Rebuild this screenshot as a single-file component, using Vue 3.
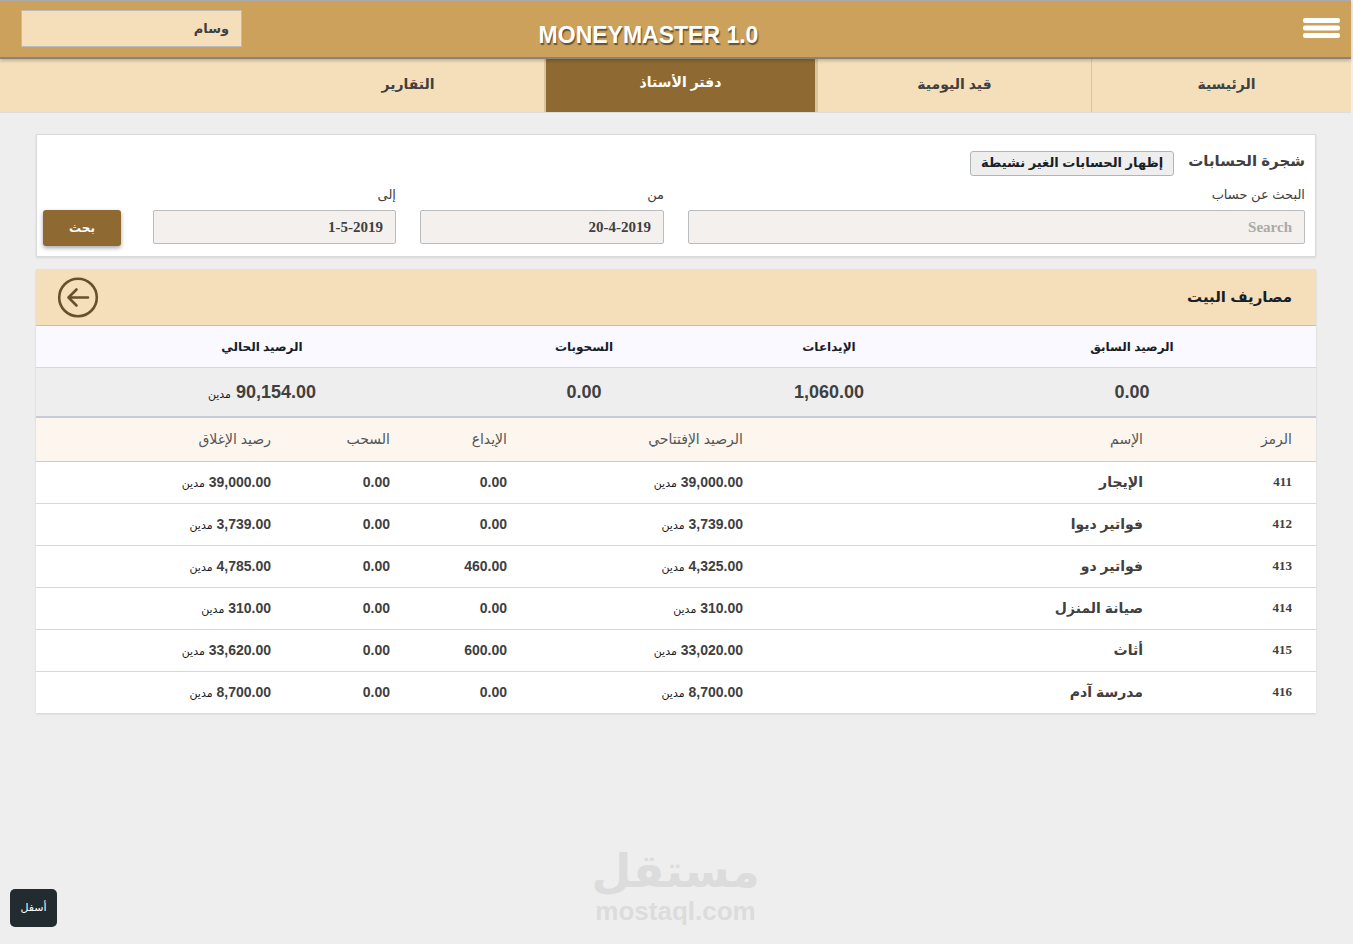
<template>
  <div class="page" dir="rtl">
    <header class="topbar">
      <button class="menu-button" type="button" aria-label="القائمة">
        <svg width="38" height="22" viewBox="0 0 38 22" aria-hidden="true">
          <rect x="1" y="1" width="37" height="5" rx="2" />
          <rect x="1" y="8.500" width="37" height="5" rx="2" />
          <rect x="1" y="16" width="37" height="5" rx="2" />
        </svg>
      </button>
      <h1 class="brand">MONEYMASTER 1.0</h1>
      <input v-model="userName" class="user-name" type="text" aria-label="المستخدم">
    </header>

    <nav class="tabs">
      <a
        v-for="tab in tabs"
        :key="tab"
        href="#"
        class="tab"
        :class="{ active: tab === activeTab }"
        @click.prevent="activeTab = tab"
      >{{ tab }}</a>
    </nav>

    <main class="content">
      <section class="search-card">
        <div class="search-head">
          <h2 class="search-title">شجرة الحسابات</h2>
          <button class="toggle-inactive" type="button">إظهار الحسابات الغير نشيطة</button>
        </div>
        <form class="search-form" @submit.prevent>
          <div class="field">
            <label for="account">البحث عن حساب</label>
            <input id="account" v-model="query" type="text" placeholder="Search">
          </div>
          <div class="field">
            <label for="from">من</label>
            <input id="from" v-model="from" type="text">
          </div>
          <div class="field">
            <label for="to">إلى</label>
            <input id="to" v-model="to" type="text">
          </div>
          <button class="search-button" type="submit">بحث</button>
        </form>
      </section>

      <section class="ledger">
        <div class="ledger-head">
          <h2 class="ledger-title">مصاريف البيت</h2>
          <button class="back-button" type="button" aria-label="رجوع">
            <svg width="42" height="42" viewBox="0 0 42 42" aria-hidden="true">
              <circle cx="21" cy="21.500" r="18.800" />
              <path d="M31 21.500H11.500M19.500 13.500l-8 8 8 8" />
            </svg>
          </button>
        </div>

        <table class="summary">
          <colgroup>
            <col class="col-previous">
            <col class="col-deposits">
            <col class="col-withdrawals">
            <col class="col-current">
          </colgroup>
          <thead>
            <tr>
              <th>الرصيد السابق</th>
              <th>الإيداعات</th>
              <th>السحوبات</th>
              <th>الرصيد الحالي</th>
            </tr>
          </thead>
          <tbody>
            <tr>
              <td>0.00</td>
              <td>1,060.00</td>
              <td>0.00</td>
              <td>90,154.00 <span class="currency">مدين</span></td>
            </tr>
          </tbody>
        </table>

        <table class="accounts">
          <colgroup>
            <col class="col-code">
            <col class="col-name">
            <col class="col-opening">
            <col class="col-in">
            <col class="col-out">
            <col class="col-closing">
          </colgroup>
          <thead>
            <tr>
              <th>الرمز</th>
              <th>الإسم</th>
              <th>الرصيد الإفتتاحي</th>
              <th>الإيداع</th>
              <th>السحب</th>
              <th>رصيد الإغلاق</th>
            </tr>
          </thead>
          <tbody>
            <tr v-for="row in accounts" :key="row.code">
              <td class="code">{{ row.code }}</td>
              <td class="name">{{ row.name }}</td>
              <td>{{ row.opening }} <span class="currency">مدين</span></td>
              <td>{{ row.deposit }}</td>
              <td>{{ row.withdrawal }}</td>
              <td>{{ row.closing }} <span class="currency">مدين</span></td>
            </tr>
          </tbody>
        </table>
      </section>
    </main>

    <footer class="watermark">
      <span class="watermark-name">مستقل</span>
      <span class="watermark-site">mostaql.com</span>
    </footer>

    <button class="scroll-down" type="button">أسفل</button>
  </div>
</template>

<script setup>
import { ref } from 'vue'

const tabs = ['الرئيسية', 'قيد اليومية', 'دفتر الأستاذ', 'التقارير']
const activeTab = ref('دفتر الأستاذ')

const userName = ref('وسام')
const query = ref('')
const from = ref('20-4-2019')
const to = ref('1-5-2019')

const accounts = [
  { code: '411', name: 'الإيجار', opening: '39,000.00', deposit: '0.00', withdrawal: '0.00', closing: '39,000.00' },
  { code: '412', name: 'فواتير ديوا', opening: '3,739.00', deposit: '0.00', withdrawal: '0.00', closing: '3,739.00' },
  { code: '413', name: 'فواتير دو', opening: '4,325.00', deposit: '460.00', withdrawal: '0.00', closing: '4,785.00' },
  { code: '414', name: 'صيانة المنزل', opening: '310.00', deposit: '0.00', withdrawal: '0.00', closing: '310.00' },
  { code: '415', name: 'أثاث', opening: '33,020.00', deposit: '600.00', withdrawal: '0.00', closing: '33,620.00' },
  { code: '416', name: 'مدرسة آدم', opening: '8,700.00', deposit: '0.00', withdrawal: '0.00', closing: '8,700.00' }
]
</script>

<style>
body {
  margin: 0;
  background: #eee;
}
</style>

<style scoped>
* {
  box-sizing: border-box;
}

.page {
  display: flex;
  flex-direction: column;
  min-height: 100vh;
  padding-right: 2px;
  color: #404040;
  background: #eee;
  font-family: "Liberation Sans", "DejaVu Sans", sans-serif;
  font-size: 14px;
}

button,
input {
  font-family: inherit;
}

button {
  cursor: pointer;
}

.topbar {
  display: grid;
  grid-template-columns: 1fr auto 1fr;
  align-items: center;
  height: 59px;
  padding: 0 11px 2px 21px;
  background: #cba15b;
  border-top: 1px solid #aaa;
  border-bottom: 2px solid #88847a;
  box-shadow: 0 2px 3px rgba(0, 0, 0, 0.2);
  position: relative;
}

.menu-button {
  justify-self: start;
  width: 38px;
  height: 22px;
  padding: 0;
  border: 0;
  background: none;
}

.menu-button svg {
  display: block;
  fill: #fff;
}

.brand {
  margin: 14px 64px 0 0;
  color: #fff;
  font-size: 23px;
  line-height: 28px;
  font-weight: 700;
  text-shadow: 1px 2px 1px rgba(0, 0, 0, 0.5);
}

.user-name {
  justify-self: end;
  width: 221px;
  height: 37px;
  padding: 0 12px;
  border: 1px solid #bbb;
  background: #f5dfba;
  color: #404040;
  font-size: 13px;
  font-weight: 700;
}

.tabs {
  display: grid;
  grid-template-columns: 260fr 274fr 273fr 272fr 272fr;
  height: 54px;
  background: #f5dfba;
  border-bottom: 1px solid #ddd;
}

.tab {
  display: flex;
  align-items: center;
  justify-content: center;
  padding-bottom: 4px;
  border-left: 1px solid #dcc59d;
  color: #404040;
  font-weight: 700;
  text-decoration: none;
}

.tab:first-child {
  padding-left: 10px;
}

.tab:last-child {
  border-left: 0;
}

.tab.active {
  border: solid #dcc59d;
  border-width: 0 2px;
  background: #8e6a32;
  color: #fff;
  padding-bottom: 8px;
}

.content {
  padding: 21px 35px 0 36px;
}

.search-card {
  padding: 16px 10px 12px 6px;
  border: 1px solid #d8dadb;
  background: #fff;
  box-shadow: 0 1px 2px rgba(0, 0, 0, 0.1);
}

.search-head {
  display: flex;
  align-items: center;
  gap: 14px;
  height: 24px;
}

.search-title {
  margin: 0 0 4px;
  font-size: 15px;
  line-height: 20px;
}

.toggle-inactive {
  height: 25px;
  padding: 0 10px;
  border: 1px solid #b0b5b8;
  border-radius: 3px;
  background: #eee;
  color: #172026;
  font-size: 13px;
  font-weight: 700;
  line-height: 20px;
}

.search-form {
  display: grid;
  grid-template-columns: 617fr 244fr 243fr 86px;
  column-gap: 24px;
  align-items: end;
  margin-top: 11px;
}

.field label {
  display: block;
  margin-bottom: 6px;
  font-size: 13px;
  line-height: 18px;
}

.field input {
  display: block;
  width: 100%;
  height: 34px;
  padding: 0 12px;
  border: 1px solid #b9bdc0;
  border-radius: 2px;
  background: #f4f0ed;
  color: #404040;
  font-family: "Liberation Serif", serif;
  font-size: 15px;
  font-weight: 700;
}

.field input::placeholder {
  color: #aaa;
  opacity: 1;
}

.search-button {
  width: 78px;
  height: 36px;
  margin: 0 8px -2px 0;
  border: 0;
  border-radius: 3px;
  background: #8e6a32;
  color: #fff;
  font-size: 12px;
  font-weight: 700;
  box-shadow: 0 2px 4px rgba(0, 0, 0, 0.35);
}

.ledger {
  margin-top: 12px;
  background: #fff;
  box-shadow: 0 1px 2px rgba(0, 0, 0, 0.12);
}

.ledger-head {
  display: flex;
  align-items: center;
  justify-content: space-between;
  height: 57px;
  padding: 0 24px 0 21px;
  border-bottom: 1px solid #bbbfc0;
  background: #f5dfba;
}

.ledger-title {
  margin: 0;
  color: #172026;
  font-size: 15px;
}

.back-button {
  width: 42px;
  height: 42px;
  padding: 0;
  border: 0;
  background: none;
}

.back-button svg {
  display: block;
  fill: none;
  stroke: #67502c;
  stroke-width: 2.6;
  stroke-linecap: round;
  stroke-linejoin: round;
}

table {
  width: 100%;
  border-collapse: separate;
  border-spacing: 0;
  table-layout: fixed;
}

th,
td {
  padding: 0;
}

.summary th {
  height: 42px;
  border-bottom: 1px solid #d6d8da;
  background: #f9f9ff;
  color: #172026;
  font-size: 12px;
}

.summary td {
  height: 50px;
  border-bottom: 2px solid #c8ccd8;
  background: #eee;
  font-size: 18px;
  font-weight: 700;
  text-align: center;
}

.summary th:last-child,
.summary td:last-child {
  padding-left: 30px;
}

.col-previous { width: 368px; }
.col-deposits { width: 238px; }
.col-withdrawals { width: 252px; }
.col-current { width: 422px; }

.accounts th {
  height: 44px;
  padding: 0 24px 2px 0;
  border-bottom: 1px solid #ccc;
  background: #fcf6ef;
  color: #555;
  font-size: 14px;
  font-weight: 400;
  text-align: right;
}

.accounts td {
  height: 42px;
  padding: 0 24px 2px 0;
  border-bottom: 1px solid #d6d8da;
  font-weight: 700;
}

.accounts tr:last-child td {
  height: 41px;
  border-bottom: 0;
}

.accounts .code {
  font-family: "Liberation Serif", serif;
  font-size: 13px;
}

.col-code { width: 149px; }
.col-name { width: 400px; }
.col-opening { width: 236px; }
.col-in { width: 117px; }
.col-out { width: 119px; }
.col-closing { width: 259px; }

.currency {
  color: #172026;
  font-size: 11px;
  font-weight: 400;
}

.watermark {
  display: flex;
  flex-direction: column;
  align-items: center;
  margin-top: auto;
  padding-bottom: 18px;
  color: #dcdcdc;
  font-weight: 700;
}

.watermark-name {
  margin-bottom: 2px;
  font-size: 46px;
  line-height: 46px;
}

.watermark-site {
  font-size: 26px;
  line-height: 30px;
}

.scroll-down {
  position: fixed;
  bottom: 17px;
  left: 10px;
  width: 47px;
  height: 38px;
  padding: 0 0 2px;
  border: 0;
  border-radius: 5px;
  background: #222b30;
  color: #fff;
  font-size: 11px;
}
</style>
